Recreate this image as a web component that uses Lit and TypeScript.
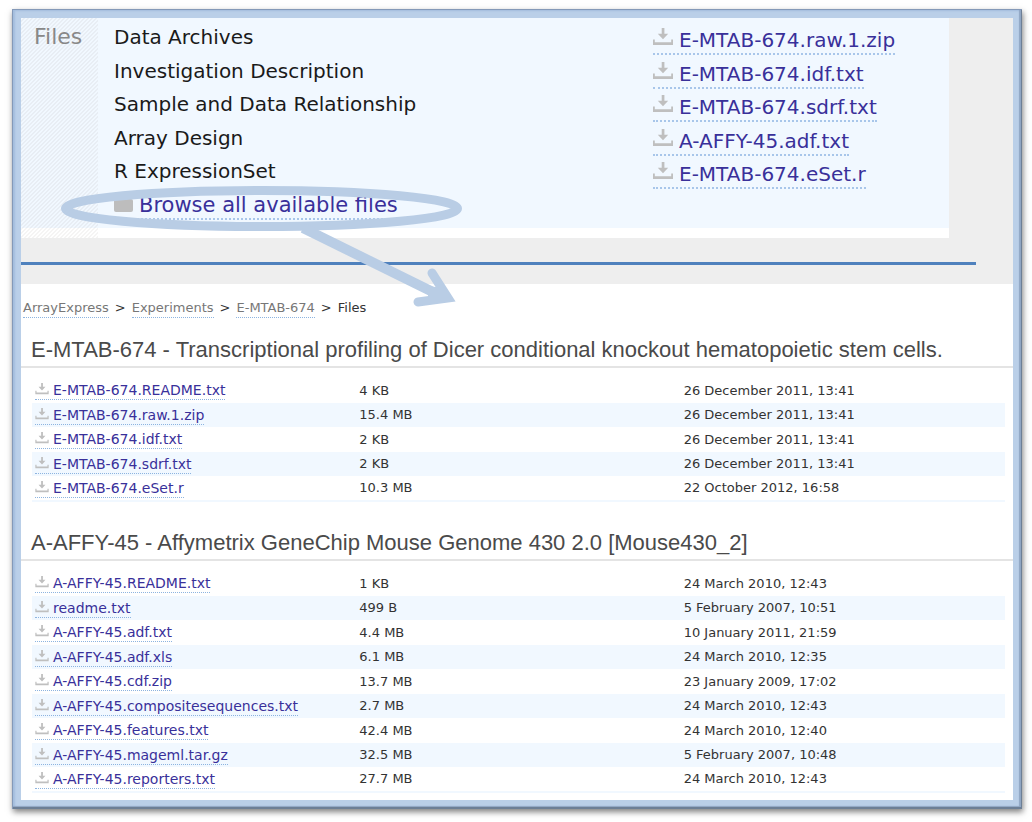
import { LitElement, html, css, svg } from "lit";
import { customElement, property } from "lit/decorators.js";

interface FileRow {
  name: string;
  size: string;
  date: string;
}

const downloadIcon = html`<svg class="icon" viewBox="0 0 20 18" aria-hidden="true">
  ${svg`<path fill="#bfbfbf" d="M8.700 0h2.700v5.800h3.800L10 11.200 4.800 5.800h3.900zM0 11.500h1.800v2.800h16.400v-2.800H20v5.500H0z" />`}
</svg>`;

const panelLabels = [
  "Data Archives",
  "Investigation Description",
  "Sample and Data Relationship",
  "Array Design",
  "R ExpressionSet",
];

const panelFiles = [
  "E-MTAB-674.raw.1.zip",
  "E-MTAB-674.idf.txt",
  "E-MTAB-674.sdrf.txt",
  "A-AFFY-45.adf.txt",
  "E-MTAB-674.eSet.r",
];

const experimentFiles: FileRow[] = [
  { name: "E-MTAB-674.README.txt", size: "4 KB", date: "26 December 2011, 13:41" },
  { name: "E-MTAB-674.raw.1.zip", size: "15.4 MB", date: "26 December 2011, 13:41" },
  { name: "E-MTAB-674.idf.txt", size: "2 KB", date: "26 December 2011, 13:41" },
  { name: "E-MTAB-674.sdrf.txt", size: "2 KB", date: "26 December 2011, 13:41" },
  { name: "E-MTAB-674.eSet.r", size: "10.3 MB", date: "22 October 2012, 16:58" },
];

const arrayFiles: FileRow[] = [
  { name: "A-AFFY-45.README.txt", size: "1 KB", date: "24 March 2010, 12:43" },
  { name: "readme.txt", size: "499 B", date: "5 February 2007, 10:51" },
  { name: "A-AFFY-45.adf.txt", size: "4.4 MB", date: "10 January 2011, 21:59" },
  { name: "A-AFFY-45.adf.xls", size: "6.1 MB", date: "24 March 2010, 12:35" },
  { name: "A-AFFY-45.cdf.zip", size: "13.7 MB", date: "23 January 2009, 17:02" },
  { name: "A-AFFY-45.compositesequences.txt", size: "2.7 MB", date: "24 March 2010, 12:43" },
  { name: "A-AFFY-45.features.txt", size: "42.4 MB", date: "24 March 2010, 12:40" },
  { name: "A-AFFY-45.mageml.tar.gz", size: "32.5 MB", date: "5 February 2007, 10:48" },
  { name: "A-AFFY-45.reporters.txt", size: "27.7 MB", date: "24 March 2010, 12:43" },
];

@customElement("file-section")
export class FileSection extends LitElement {
  @property() heading = "";
  @property({ attribute: false }) files: FileRow[] = [];

  static styles = css`
    :host {
      display: block;
    }
    .heading {
      margin: 0;
      padding: 0 10px;
      border-bottom: 2px solid #e4e4e4;
      font: 300 22px/32px "Liberation Sans", Arial, sans-serif;
      color: #4a4a4a;
      white-space: nowrap;
    }
    .wrap {
      padding: 10px 8px 0 11px;
    }
    .files {
      width: 100%;
      table-layout: fixed;
      border-collapse: collapse;
      border-bottom: 2px solid #f1f8ff;
      font-size: 13px;
      line-height: 18px;
      color: #333;
    }
    .row {
      height: 25px;
    }
    .row:nth-child(even) {
      height: 24px;
      background: #f1f8ff;
    }
    .cell {
      padding: 0 0 0 3px;
      vertical-align: middle;
      white-space: nowrap;
    }
    .link {
      display: inline-flex;
      align-items: center;
      gap: 4px;
      font-size: 14px;
      border-bottom: 1px dotted #8db4e0;
      color: #39309a;
      text-decoration: none;
    }
    .icon {
      width: 14px;
      height: 12px;
      margin-bottom: 2px;
    }
  `;

  render() {
    return html`
      <h2 class="heading">${this.heading}</h2>
      <div class="wrap">
        <table class="files">
          <tbody>
            ${this.files.map(
              (f) => html`<tr class="row">
                <td class="cell"><a class="link" href="#">${downloadIcon}<span>${f.name}</span></a></td>
                <td class="cell">${f.size}</td>
                <td class="cell">${f.date}</td>
              </tr>`
            )}
          </tbody>
        </table>
      </div>
    `;
  }
}

@customElement("app-root")
export class AppRoot extends LitElement {
  static styles = css`
    :host {
      display: block;
      padding: 9px 10px 13px 12px;
      background: #fff;
      font-family: "DejaVu Sans", Verdana, sans-serif;
    }
    .frame {
      padding: 9px;
      background: #bacfe8;
      box-shadow:
        inset 1px 1px 0 #8499b8,
        inset -1px -2px 0 #6d7f96,
        inset -3px -3px 1px #8fa5c2,
        inset 3px 2px 2px #a3bddd,
        1px 3px 6px rgba(0, 0, 0, 0.5);
    }
    .sheet {
      background: #fff;
      padding-bottom: 7px;
    }
    .top {
      position: relative;
      background: #eee;
      padding-bottom: 19px;
    }
    .panel {
      display: grid;
      grid-template-columns: 77px 555fr 296fr;
      margin-right: 64px;
      background: linear-gradient(#f1f8ff, #f1f8ff) 0 0 / 100% 210px no-repeat #fff;
      font-size: 20px;
      line-height: 34px;
      color: #1a1a1a;
    }
    .side {
      padding: 2px 0 0 13px;
      font-size: 22px;
      color: #888;
      background: linear-gradient(
          135deg,
          transparent 25%,
          rgba(60, 50, 40, 0.05) 25% 50%,
          transparent 50% 75%,
          rgba(60, 50, 40, 0.05) 75%
        )
        0 0 / 4px 4px;
    }
    .list {
      list-style: none;
      margin: 0;
      padding: 2px 0 17px 16px;
      white-space: nowrap;
    }
    .links {
      padding: 4px 0 0;
    }
    .item {
      height: 34px;
    }
    .item:nth-child(even) {
      height: 33px;
    }
    .link {
      display: inline-flex;
      align-items: center;
      gap: 6px;
      line-height: 26px;
      border-bottom: 2px dotted #a8c6ea;
      color: #39309a;
      text-decoration: none;
    }
    .icon {
      width: 20px;
      height: 18px;
      margin-bottom: 5px;
    }
    .folder {
      width: 19px;
      height: 13px;
      margin-top: 2px;
      border-radius: 2px;
      background: #bdbdbd;
    }
    .browse {
      font-size: 21px;
    }
    .rule {
      height: 3px;
      margin: 24px 37px 0 0;
      border: 0;
      background: #4f81bd;
    }
    .callout {
      position: absolute;
      left: 0;
      top: 0;
      width: 460px;
      height: 300px;
      overflow: visible;
      pointer-events: none;
    }
    .crumbs {
      display: flex;
      gap: 6px;
      padding: 14px 2px 16px;
      font-size: 13px;
      line-height: 20px;
      color: #333;
    }
    .crumb {
      line-height: 18px;
      padding-top: 1px;
      color: #777;
      text-decoration: none;
      border-bottom: 1px dotted #8db4e0;
    }
    .second {
      margin-top: 25px;
    }
  `;

  render() {
    return html`
      <div class="frame">
        <main class="sheet">
          <section class="top">
            <div class="panel">
              <div class="side">Files</div>
              <ul class="list">
                ${panelLabels.map((t) => html`<li class="item">${t}</li>`)}
                <li class="item">
                  <a class="link browse" href="#"><span class="folder"></span><span>Browse all available files</span></a>
                </li>
              </ul>
              <ul class="list links">
                ${panelFiles.map(
                  (t) => html`<li class="item"><a class="link" href="#">${downloadIcon}<span>${t}</span></a></li>`
                )}
              </ul>
            </div>
            <hr class="rule" />
            <svg class="callout" viewBox="0 0 460 300" fill="none" stroke="#b9cde5" stroke-width="9" aria-hidden="true">
              <ellipse cx="240.500" cy="190.500" rx="196" ry="18" />
              <path d="M282 210 L422 279" stroke-width="10" />
              <path d="M411 255 L427 280 L397 284" stroke-linecap="round" stroke-linejoin="miter" />
              <path d="M405 268 L424 270 L430 282 L408 282 z" fill="#b9cde5" stroke="none" />
            </svg>
          </section>
          <nav class="crumbs" aria-label="Breadcrumb">
            <a class="crumb" href="#">ArrayExpress</a>
            <span>&gt;</span>
            <a class="crumb" href="#">Experiments</a>
            <span>&gt;</span>
            <a class="crumb" href="#">E-MTAB-674</a>
            <span>&gt;</span>
            <span>Files</span>
          </nav>
          <file-section
            .heading=${"E-MTAB-674 - Transcriptional profiling of Dicer conditional knockout hematopoietic stem cells."}
            .files=${experimentFiles}
          ></file-section>
          <file-section
            class="second"
            .heading=${"A-AFFY-45 - Affymetrix GeneChip Mouse Genome 430 2.0 [Mouse430_2]"}
            .files=${arrayFiles}
          ></file-section>
        </main>
      </div>
    `;
  }
}
